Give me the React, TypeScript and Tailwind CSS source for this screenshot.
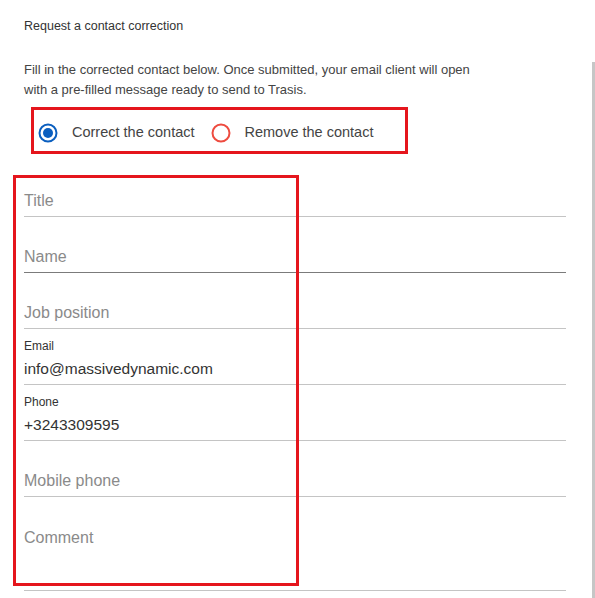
import React from "react";

type Field = {
  label: string;
  value?: string;
  tall?: boolean;
  dark?: boolean;
};

const fields: Field[] = [
  { label: "Title" },
  { label: "Name", dark: true },
  { label: "Job position" },
  { label: "Email", value: "info@massivedynamic.com" },
  { label: "Phone", value: "+3243309595" },
  { label: "Mobile phone" },
  { label: "Comment", tall: true },
];

const FormField: React.FC<{ field: Field }> = ({ field }) => {
  const line = field.dark ? "border-[#7b7b7b]" : "border-[#c4c4c4]";
  return (
    <div className={`flex flex-col border-b ${line} ${field.tall ? "h-[94px]" : "h-[56px]"}`}>
      <div className="h-[25px] flex items-end pb-[1px] text-[12px] leading-[14px] text-[#333]">
        {field.value ? field.label : ""}
      </div>
      <div
        className={`h-[31px] flex items-center ${
          field.value ? "text-[15.5px] text-[#333]" : "text-[16px] text-[#8a8a8a]"
        }`}
      >
        {field.value ?? field.label}
      </div>
    </div>
  );
};

const Radio: React.FC<{ checked?: boolean; label: string }> = ({ checked, label }) => (
  <label className="flex items-center gap-[14px]">
    {checked ? (
      <svg width="20" height="20" viewBox="0 0 20 20">
        <circle cx="10" cy="10" r="8.5" fill="none" stroke="#0b5fbf" strokeWidth="2" />
        <circle cx="10" cy="10" r="5" fill="#0b5fbf" />
      </svg>
    ) : (
      <svg width="20" height="20" viewBox="0 0 20 20">
        <circle cx="10" cy="10" r="8.5" fill="none" stroke="#ee4b3f" strokeWidth="2" />
      </svg>
    )}
    <span className="text-[14.5px] text-[#444]">{label}</span>
  </label>
);

export default function App() {
  return (
    <div
      className="relative w-[595px] h-[598px] overflow-hidden bg-white"
      style={{ fontFamily: '"Liberation Sans", Arial, sans-serif' }}
    >
      <div className="pl-[24px] pr-[29px] pt-[17px]">
        <h2 className="text-[12.5px] leading-[18px] text-[#333]">Request a contact correction</h2>
        <p className="mt-[25px] text-[13px] leading-[20px] text-[#444]">
          Fill in the corrected contact below. Once submitted, your email client will open
          <br />
          with a pre-filled message ready to send to Trasis.
        </p>
        <div className="mt-[7px] ml-[7px] w-[377px] h-[47px] border-[3px] border-[#e5161d] flex items-center gap-[16px] pl-[4px] pt-[5px]">
          <Radio checked label="Correct the contact" />
          <Radio label="Remove the contact" />
        </div>
        <div className="mt-[7px] flex flex-col">
          {fields.map((f) => (
            <FormField key={f.label} field={f} />
          ))}
        </div>
      </div>

      {/* annotation box around the fields */}
      <div className="absolute left-[13px] top-[175px] w-[286px] h-[411px] border-[3px] border-[#e5161d] pointer-events-none" />

      {/* scrollbar */}
      <div className="absolute right-0 top-[62px] bottom-0 w-[3px] bg-[#c6c6c6]" />
    </div>
  );
}
